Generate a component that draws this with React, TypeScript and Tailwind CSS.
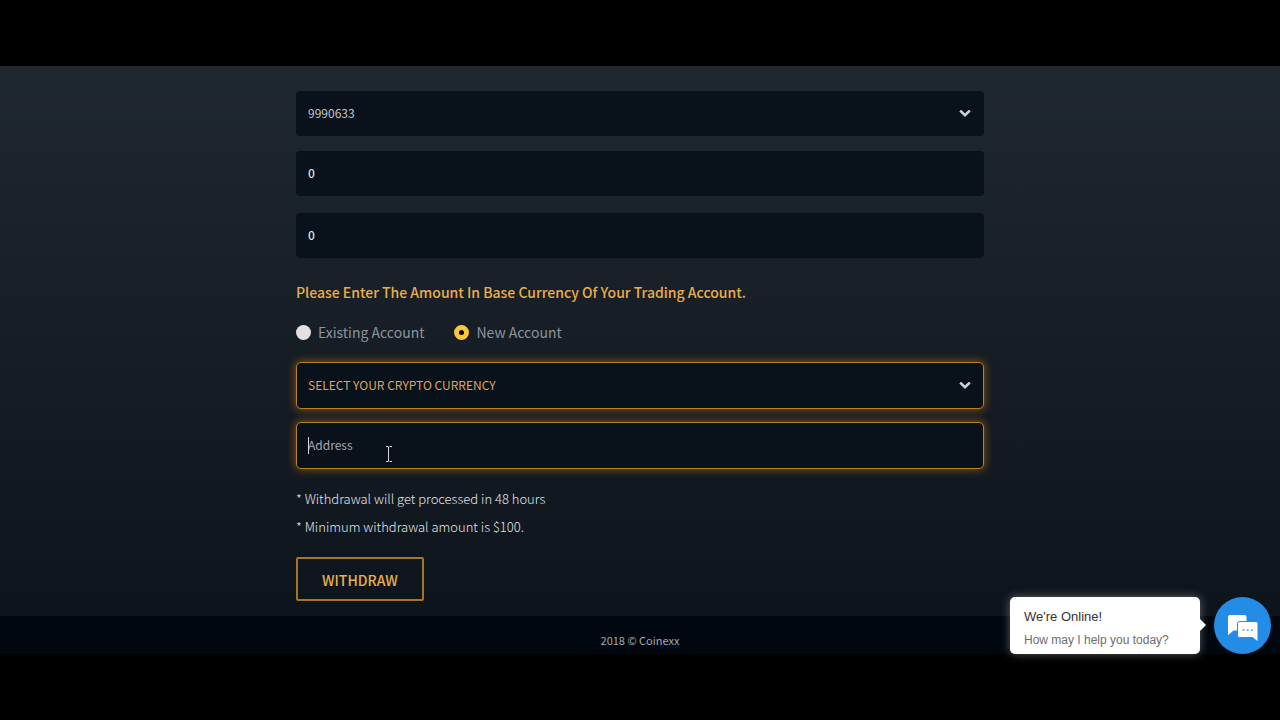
import { useState } from "react";

const plainField =
  "block h-[45px] w-full appearance-none rounded bg-[#09111a] px-3 pb-0.5 text-xs outline-none";
const glowField =
  "block h-[47px] w-full appearance-none rounded-[5px] border border-[#b98127] bg-[#09111a] px-[11px] pb-0.5 text-xs shadow-[0_0_8px_1px_rgba(190,115,10,0.6)] outline-none";
const radioDot =
  "size-[15px] appearance-none rounded-full bg-[#e6dfe0] checked:border-[5px] checked:border-[#fbc73a] checked:bg-black";

function Chevron() {
  return (
    <svg
      className="pointer-events-none absolute right-[13px] top-1/2 h-2 w-3 -translate-y-1/2"
      viewBox="0 0 12 8"
      fill="none"
      stroke="#c9d0dc"
      strokeWidth="2.6"
      aria-hidden="true"
    >
      <path d="M1.200 .6 6 5.200l4.800-4.600" />
    </svg>
  );
}

function TextCursor() {
  return (
    <svg
      className="pointer-events-none absolute left-[89px] top-6 h-4 w-2"
      viewBox="0 0 8 16"
      fill="none"
      stroke="#d5d9df"
      strokeWidth="1"
      aria-hidden="true"
    >
      <path d="M1 .5h2.500M4.500 .5H7M3.500 1v14M1 15.500h2.500M4.500 15.500H7" />
    </svg>
  );
}

function ChatWidget() {
  return (
    <aside className="absolute bottom-0 right-[9px] flex items-center">
      <div className="relative w-[190px] rounded-[5px] bg-white px-[14px] pb-1 pt-[10px] font-['Liberation_Sans',sans-serif] shadow-[0_0_10px_rgba(255,255,255,0.35)]">
        <p className="text-[13px] leading-[19px] text-[#333]">We&apos;re Online!</p>
        <p className="mt-[5px] text-xs leading-[19px] text-[#6d6d6d]">How may I help you today?</p>
        <svg className="absolute -right-[6px] top-[22px] h-3 w-[6px]" viewBox="0 0 6 12" aria-hidden="true">
          <path d="M0 0 6 6 0 12z" fill="#fff" />
        </svg>
      </div>
      <button type="button" aria-label="Open chat" className="ml-[14px] size-[57px] rounded-full bg-[#238ce6]">
        <svg viewBox="0 0 57 57" className="size-full" aria-hidden="true">
          <path d="M15.500 18h15a2 2 0 0 1 2 2v13.500h-13L14 38.300V20a2 2 0 0 1 1.500-2z" fill="#fff" />
          <path
            d="M25.500 24.500h16.500a2 2 0 0 1 2 2V45l-5.500-4.500h-13a2 2 0 0 1-2-2v-12a2 2 0 0 1 2-2z"
            fill="#fff"
            stroke="#238ce6"
            strokeWidth="1"
          />
          <path d="M28.500 33h2m2.200 0h2m2.200 0h2" stroke="#5c9fd8" strokeWidth="1.600" />
        </svg>
      </button>
    </aside>
  );
}

export default function App() {
  const [kind, setKind] = useState("new");
  return (
    <div className="flex min-h-screen flex-col bg-black py-[66px] font-['Noto_Sans_CJK_SC',sans-serif]">
      <div className="relative flex flex-1 flex-col bg-linear-to-b from-[#1f272f] to-[#0d131b]">
        <main className="mx-auto w-full max-w-[688px] flex-1 pb-[14px] pt-[25px]">
          <form onSubmit={(e) => e.preventDefault()}>
            <div className="relative">
              <select aria-label="Trading account" className={plainField + " text-[#c2c5cb]"}>
                <option>9990633</option>
              </select>
              <Chevron />
            </div>
            <input aria-label="Balance" defaultValue="0" className={plainField + " mt-[15px] font-medium text-[#dfe2e6]"} />
            <input aria-label="Amount" defaultValue="0" className={plainField + " mt-[17px] font-medium text-[#dfe2e6]"} />
            <p className="mt-[22px] text-sm font-medium leading-6 text-[#e9ae4c]">
              Please Enter The Amount In Base Currency Of Your Trading Account.
            </p>
            <div className="mt-4 flex gap-[30px] text-sm leading-6 text-[#8d949c]">
              <label className="flex items-center gap-[7px]">
                <input
                  type="radio"
                  name="kind"
                  className={radioDot}
                  checked={kind === "existing"}
                  onChange={() => setKind("existing")}
                />
                Existing Account
              </label>
              <label className="flex items-center gap-[7px]">
                <input
                  type="radio"
                  name="kind"
                  className={radioDot}
                  checked={kind === "new"}
                  onChange={() => setKind("new")}
                />
                New Account
              </label>
            </div>
            <div className="relative mt-[18px]">
              <select aria-label="Crypto currency" className={glowField + " text-[#dfa468]"}>
                <option>SELECT YOUR CRYPTO CURRENCY</option>
              </select>
              <Chevron />
            </div>
            <div className="relative mt-[13px]">
              <input
                aria-label="Address"
                placeholder="Address"
                className={glowField + " text-[#b9bcc3] placeholder:text-[#a5a9b0]"}
              />
              <span className="absolute left-3 top-[15px] h-[17px] w-px bg-[#d5d9df]" />
              <TextCursor />
            </div>
            <div className="mt-4 text-[13px] font-light leading-7 text-[#e2e4e7]">
              <p>* Withdrawal will get processed in 48 hours</p>
              <p>* Minimum withdrawal amount is $100.</p>
            </div>
            <button
              type="submit"
              className="mt-4 h-11 rounded-[2px] border-2 border-[#a8741f] px-6 pt-0.5 text-sm font-medium text-[#e9ae4c]"
            >
              WITHDRAW
            </button>
          </form>
        </main>
        <footer className="flex h-[38px] items-center justify-center bg-[#01070f] pt-2.5 text-[11px] text-[#a6a9ae]">
          2018 © Coinexx
        </footer>
        <ChatWidget />
      </div>
    </div>
  );
}
